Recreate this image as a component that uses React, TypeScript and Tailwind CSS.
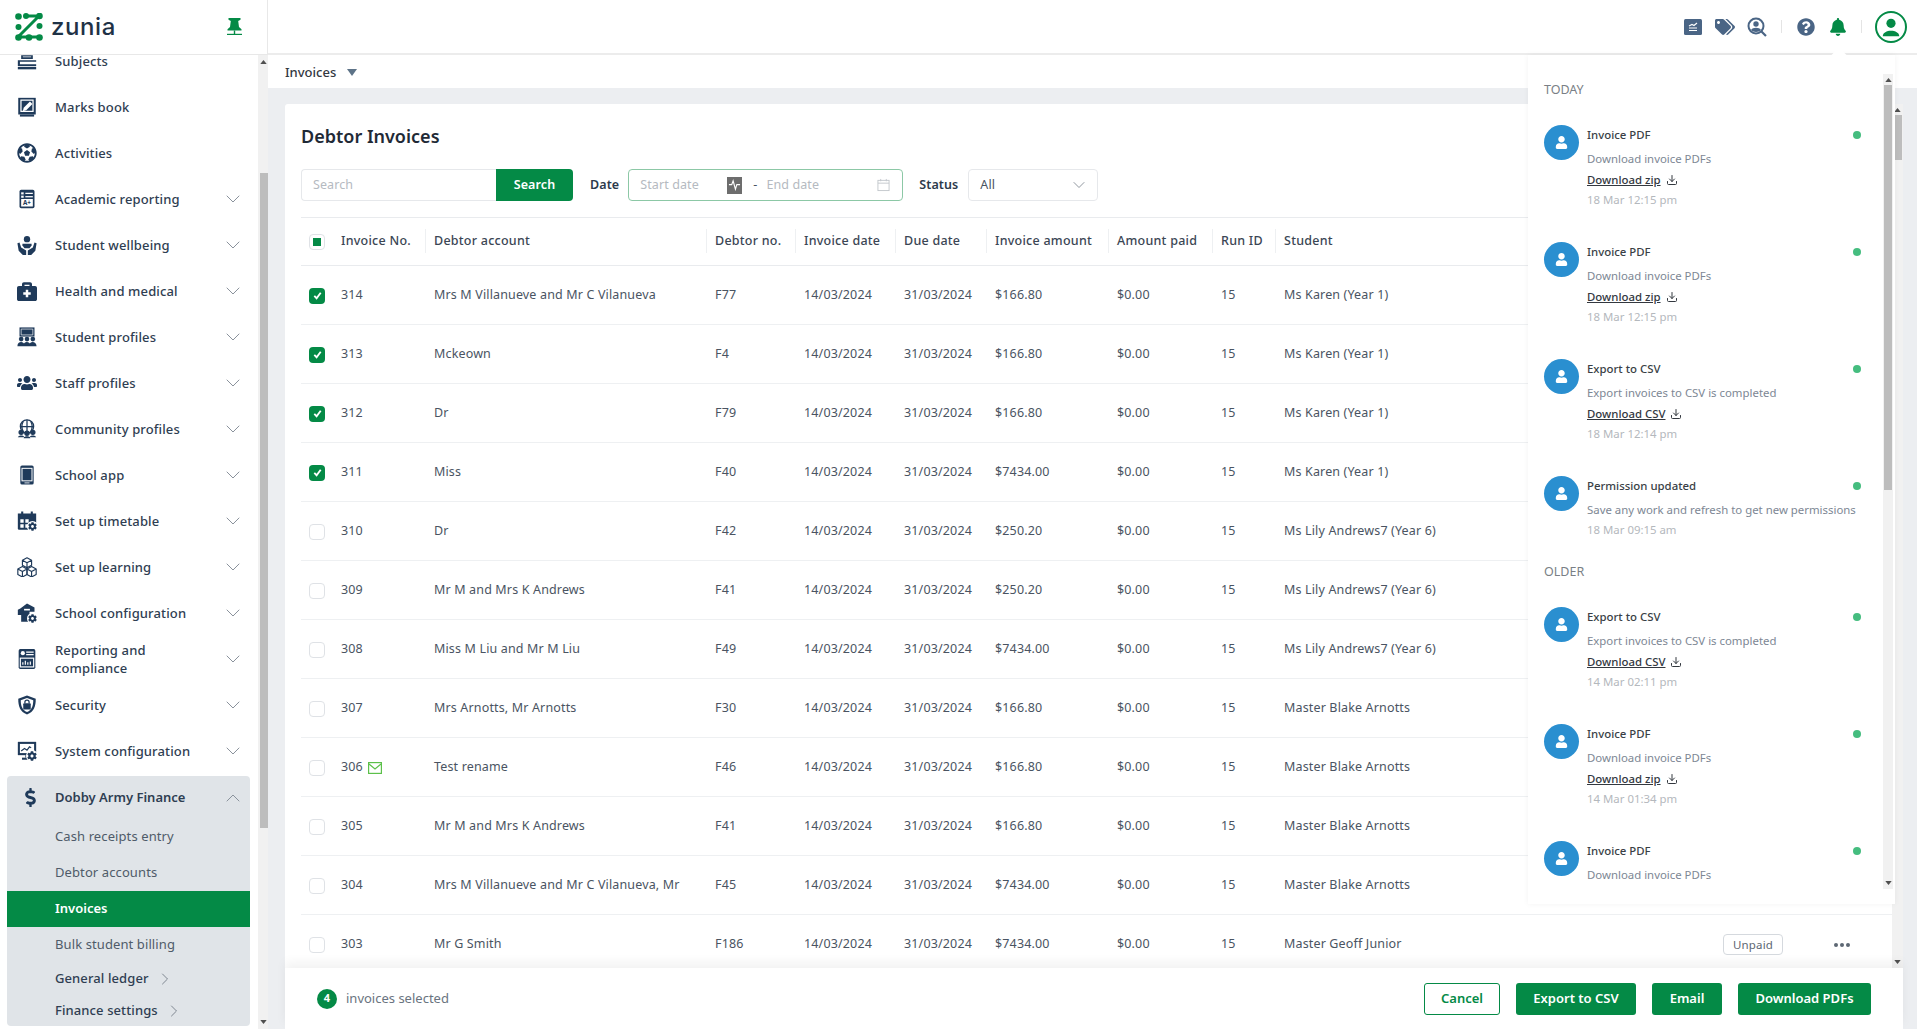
/**
 * Debtor invoices screen with the notifications panel open.
 */
import { ChevronDown, ChevronRight, ChevronUp, Download } from "lucide-react";
import {
  FaBell,
  FaBriefcaseMedical,
  FaCog,
  FaDollarSign,
  FaFutbol,
  FaQuestionCircle,
  FaTags,
  FaUser,
  FaUsers,
} from "react-icons/fa";
import type { ReactNode } from "react";

const NAVY = "#1f3a5a";

function BooksIcon() {
  return (
    <svg viewBox="0 0 24 24" className="w-5 h-5" fill={NAVY}>
      <path d="M7 2h10v2H7zM5 5h14v4.500H5zM7 7.500h10V6.500H7z" fill={NAVY} />
      <path d="M1 11h22v2H3.500v3H23v2H1z" />
      <path d="M1 19h22v3H1z" />
    </svg>
  );
}

function MarksIcon() {
  return (
    <svg viewBox="0 0 24 24" className="w-5 h-5" fill={NAVY}>
      <path d="M1.500 1h21v20h-21z" />
      <path d="M3.500 21h17v2.500h-17z" />
      <path d="M4 3h16v15H4z" fill="#fff" />
      <path d="M5.500 4.500h13v12h-13z" />
      <path d="M15.500 5.500l3 3-7.500 7.500-4 1 1-4z" fill="#fff" />
    </svg>
  );
}

function ReportIcon() {
  return (
    <svg viewBox="0 0 24 24" className="w-5 h-5">
      <rect x="3" y="1" width="18" height="22" rx="2" fill={NAVY} />
      <rect x="5" y="12" width="14" height="9" fill="#fff" />
      <rect x="5" y="4" width="3" height="2.500" fill="#fff" />
      <rect x="10" y="4.500" width="9" height="1.500" fill="#fff" />
      <rect x="5" y="8" width="3" height="2.500" fill="#fff" />
      <rect x="10" y="8.500" width="9" height="1.500" fill="#fff" />
      <text x="12" y="19.500" textAnchor="middle" fontSize="7.500" fontWeight="700" fill={NAVY} fontFamily="Noto Sans">A+</text>
    </svg>
  );
}

function WellbeingIcon() {
  return (
    <svg viewBox="0 0 24 24" className="w-5 h-5" fill={NAVY}>
      <circle cx="12" cy="5" r="3.800" />
      <path d="M6.500 10.500h11v2l-2.500 3.500H9l-2.500-3.500z" />
      <path d="M0.500 10l2.500-1 2 6 6 3.500V24H7l-5-5zM23.500 10L21 9l-2 6-6 3.500V24h4l5-5z" />
    </svg>
  );
}

function StudentProfilesIcon() {
  return (
    <svg viewBox="0 0 24 24" className="w-5 h-5" fill={NAVY}>
      <path d="M3 0.500h18v11H3z" />
      <path d="M5 2.500h14v7H5z" fill={NAVY} stroke="#fff" strokeWidth="0.800" />
      <circle cx="5" cy="14.500" r="2.800" />
      <circle cx="12" cy="14.500" r="2.800" />
      <circle cx="19" cy="14.500" r="2.800" />
      <path d="M0.500 23c0-6.500 8.500-6.500 9 0zM7.500 23c0-6.500 8.500-6.500 9 0zM14.500 23c0-6.500 8.500-6.500 9 0z" />
    </svg>
  );
}

function GlobeGroupIcon() {
  return (
    <svg viewBox="0 0 24 24" className="w-5 h-5" fill="none" stroke={NAVY} strokeWidth="1.500">
      <circle cx="12" cy="9" r="8" />
      <path d="M4 9h16M12 1v16M7.500 3c-2 3.500-2 8.500 0 12M16.500 3c2 3.500 2 8.500 0 12" />
      <circle cx="5" cy="16" r="2.500" fill={NAVY} />
      <circle cx="19" cy="16" r="2.500" fill={NAVY} />
      <circle cx="12" cy="17" r="2.500" fill={NAVY} />
      <path d="M1 22c1-3 7-3 8 0zM8 23c1-3 7-3 8 0zM15 22c1-3 7-3 8 0z" fill={NAVY} stroke="none" />
    </svg>
  );
}

function PhoneIcon() {
  return (
    <svg viewBox="0 0 24 24" className="w-5 h-5">
      <rect x="4" y="0.500" width="16" height="23" rx="2" fill={NAVY} />
      <rect x="6" y="4" width="12" height="15" fill={NAVY} stroke="#fff" strokeWidth="1.200" />
      <rect x="9" y="21" width="6" height="1" fill="#fff" />
    </svg>
  );
}

function TimetableIcon() {
  return (
    <div className="relative w-5 h-5">
      <svg viewBox="0 0 24 24" className="w-5 h-5" fill={NAVY}>
        <path d="M5 0.500h2.500v3H5zM16.500 0.500H19v3h-2.500z" />
        <path d="M1 3h22v18a1.500 1.500 0 0 1-1.500 1.500h-19A1.500 1.500 0 0 1 1 21z" />
        <path d="M4 10h4v4H4zM10 10h4v4h-4zM4 16h4v4H4zM10 16h4v4h-4z" fill="#fff" />
      </svg>
      <span className="absolute -right-[1px] -bottom-[1px] bg-white rounded-full p-[1px]">
        <FaCog size={9} color={NAVY} />
      </span>
    </div>
  );
}

function CubesIcon() {
  return (
    <svg viewBox="0 0 24 24" className="w-5 h-5" fill="none" stroke={NAVY} strokeWidth="1.400" strokeLinejoin="round">
      <path d="M12 1l5.500 3v6L12 13l-5.500-3V4zM6.500 4L12 7l5.500-3M12 7v6" />
      <path d="M6.500 11.500L12 14.500v6.500L6.500 24 1 21v-6.500zM1 14.500l5.500 3 5.500-3M6.500 17.500V24" />
      <path d="M17.500 11.500l5.500 3V21l-5.500 3L12 21v-6.500zM12 14.500l5.500 3 5.500-3M17.500 17.500V24" />
    </svg>
  );
}

function SchoolConfigIcon() {
  return (
    <div className="relative w-5 h-5">
      <svg viewBox="0 0 24 24" className="w-5 h-5" fill={NAVY}>
        <path d="M12 0.500l9 5v5h-6v12H5v-8H1V8l3-1.500z" />
        <path d="M8.500 7h7v2h-7z" fill="#fff" />
      </svg>
      <span className="absolute -right-[1px] -bottom-[1px] bg-white rounded-full p-[1px]">
        <FaCog size={9} color={NAVY} />
      </span>
    </div>
  );
}

function ComplianceIcon() {
  return (
    <svg viewBox="0 0 24 24" className="w-5 h-5">
      <rect x="2" y="0" width="20" height="24" rx="2" fill={NAVY} />
      <circle cx="7" cy="5" r="2.500" fill="#fff" />
      <path d="M11 3h9v1.500h-9zM11 6h9v1.500h-9z" fill="#fff" />
      <rect x="4" y="11" width="16" height="10.500" fill="none" stroke="#fff" strokeWidth="1.400" />
      <path d="M7 19v-3M10 19v-5M13 19v-3M16 19v-4" stroke="#fff" strokeWidth="1.400" />
    </svg>
  );
}

function ShieldIcon() {
  return (
    <svg viewBox="0 0 24 24" className="w-5 h-5">
      <path d="M12 0.500l10.500 4c0 9-2 15.500-10.500 19C3.500 20 1.500 13.500 1.500 4.500z" fill={NAVY} />
      <path d="M12 3.500l7.500 2.800c0 6.500-1.500 11.500-7.500 14.200C6 17.800 4.500 12.800 4.500 6.300z" fill="#fff" />
      <rect x="7.500" y="10" width="9" height="7.500" rx="1" fill={NAVY} />
      <path d="M9.500 10V8.500a2.500 2.500 0 0 1 5 0V10" fill="none" stroke={NAVY} strokeWidth="1.500" />
    </svg>
  );
}

function SystemIcon() {
  return (
    <div className="relative w-5 h-5">
      <svg viewBox="0 0 24 24" className="w-5 h-5" fill={NAVY}>
        <path d="M1 1h22v16H1z" />
        <path d="M3.500 3.500h17v11h-17z" fill="#fff" />
        <path d="M5 12l4-3 3 2 3-4 2 1" fill="none" stroke={NAVY} strokeWidth="1.400" />
        <path d="M6 20h10v2.500H6z" />
        <path d="M10 17h3v3h-3z" />
      </svg>
      <span className="absolute -right-[1px] -bottom-[1px] bg-white rounded-full p-[1px]">
        <FaCog size={10} color={NAVY} />
      </span>
    </div>
  );
}

function PinIcon() {
  return (
    <svg viewBox="0 0 15 18" className="w-[15px] h-[18px]" fill="#048a46">
      <path d="M1.500 0h12v1.800l-2.300 1.200.8 6 2.500 2.200v1.300H.5v-1.300L3 9l.8-6-2.300-1.200z" />
      <path d="M6.800 12.500h1.400v3.500H6.800z" />
      <path d="M0 15.800h15V17H0z" />
    </svg>
  );
}

function ScrollArrow({ up }: { up?: boolean }) {
  return (
    <svg viewBox="0 0 8 5" className="w-[7px] h-[4px]" fill="#505050">
      <path d={up ? "M4 0l4 5H0z" : "M0 0h8L4 5z"} />
    </svg>
  );
}

function Logo() {
  return (
    <div className="flex items-center gap-[8px]">
      <svg viewBox="0 0 28 28" className="w-[28px] h-[28px]" fill="#048a46">
        <path d="M10 3h14L13 14 3 24h21" fill="none" stroke="#048a46" strokeWidth="3" strokeLinejoin="round" />
        <circle cx="3.500" cy="3.500" r="3.300" />
        <circle cx="11" cy="3" r="3" />
        <circle cx="24.500" cy="3" r="3.300" />
        <circle cx="3.500" cy="14" r="3" />
        <circle cx="24.500" cy="13" r="3" />
        <circle cx="3.500" cy="24.500" r="3.300" />
        <circle cx="14" cy="24.500" r="3.300" />
        <circle cx="24.500" cy="24.500" r="3.300" />
      </svg>
      <span className="text-[24px] leading-none font-medium tracking-[0.6px] text-[#1f3246] font-['Inter',sans-serif]">zunia</span>
    </div>
  );
}

interface NavEntry {
  label: string;
  icon: ReactNode;
  chevron?: boolean;
}

const NAV: NavEntry[] = [
  { label: "Subjects", icon: <BooksIcon /> },
  { label: "Marks book", icon: <MarksIcon /> },
  { label: "Activities", icon: <FaFutbol size={20} color={NAVY} /> },
  { label: "Academic reporting", icon: <ReportIcon />, chevron: true },
  { label: "Student wellbeing", icon: <WellbeingIcon />, chevron: true },
  { label: "Health and medical", icon: <FaBriefcaseMedical size={20} color={NAVY} />, chevron: true },
  { label: "Student profiles", icon: <StudentProfilesIcon />, chevron: true },
  { label: "Staff profiles", icon: <FaUsers size={20} color={NAVY} />, chevron: true },
  { label: "Community profiles", icon: <GlobeGroupIcon />, chevron: true },
  { label: "School app", icon: <PhoneIcon />, chevron: true },
  { label: "Set up timetable", icon: <TimetableIcon />, chevron: true },
  { label: "Set up learning", icon: <CubesIcon />, chevron: true },
  { label: "School configuration", icon: <SchoolConfigIcon />, chevron: true },
  { label: "Reporting and compliance", icon: <ComplianceIcon />, chevron: true },
  { label: "Security", icon: <ShieldIcon />, chevron: true },
  { label: "System configuration", icon: <SystemIcon />, chevron: true },
];

function Sidebar() {
  return (
    <aside className="w-[268px] shrink-0 flex flex-col bg-white">
      <div className="h-[55px] shrink-0 flex items-center justify-between pl-[15px] pr-[25px] border-b border-r border-[#e8e8e8] z-10 bg-white">
        <Logo />
        <PinIcon />
      </div>
      <div className="flex-1 min-h-0 flex">
        <nav className="w-[258px] overflow-hidden">
          <div className="-mt-[17px]">
            {NAV.map((item) => (
              <div key={item.label} className="h-[46px] flex items-center pl-[17px] pr-[13px]">
                <span className="w-[38px] shrink-0 flex">{item.icon}</span>
                <span className={`w-[136px] shrink-0 text-[13px] font-medium tracking-[0.13px] text-[#2f3e52] ${item.label.length > 22 ? "leading-[18px]" : "leading-[12px] whitespace-nowrap"}`}>
                  {item.label}
                </span>
                {item.chevron && <ChevronDown className="ml-auto w-[24px] h-[24px] text-[#8a929c]" strokeWidth={1} />}
              </div>
            ))}
            <div className="mt-[2px] mx-[7px] w-[243px] h-[250px] rounded-[4px] bg-[#e0e4e8] overflow-hidden">
              <div className="h-[43px] flex items-center pl-[10px] pr-[5px]">
                <span className="w-[38px] shrink-0 flex pl-[4px]"><FaDollarSign size={19} color={NAVY} /></span>
                <span className="text-[13px] font-semibold text-[#2f3e52]">Dobby Army Finance</span>
                <ChevronUp className="ml-auto w-[24px] h-[24px] text-[#8a929c]" strokeWidth={1} />
              </div>
              <div className="h-[36px] flex items-center pl-[48px] text-[13px] tracking-[0.1px] text-[#4f5b69]">Cash receipts entry</div>
              <div className="h-[36px] flex items-center pl-[48px] text-[13px] tracking-[0.1px] text-[#4f5b69]">Debtor accounts</div>
              <div className="h-[36px] flex items-center pl-[48px] text-[13px] font-semibold text-white bg-[#048a46]">Invoices</div>
              <div className="h-[36px] flex items-center pl-[48px] text-[13px] tracking-[0.1px] text-[#4f5b69]">Bulk student billing</div>
              <div className="h-[32px] flex items-center pl-[48px] text-[13px] font-medium tracking-[0.1px] text-[#2f3e52]">
                General ledger
                <ChevronRight className="ml-[6px] w-[20px] h-[20px] text-[#6b7480]" strokeWidth={1} />
              </div>
              <div className="h-[31px] flex items-center pl-[48px] text-[13px] font-medium tracking-[0.1px] text-[#2f3e52]">
                Finance settings
                <ChevronRight className="ml-[6px] w-[20px] h-[20px] text-[#6b7480]" strokeWidth={1} />
              </div>
            </div>
          </div>
        </nav>
        <div className="w-[10px] bg-[#f1f1f1] flex flex-col items-center justify-between py-[5px] relative">
          <ScrollArrow up />
          <div className="absolute left-[2px] right-0 top-[118px] h-[655px] bg-[#bdbdbd]" />
          <ScrollArrow />
        </div>
      </div>
    </aside>
  );
}

function TopBar() {
  return (
    <header className="h-[55px] shrink-0 bg-white border-b-2 border-[#ececec] flex items-center justify-end pr-[10px] relative">
      <svg viewBox="0 0 18 16" className="w-[18px] h-[16px] mr-[13px]">
        <rect width="18" height="16" rx="1.500" fill="#4a6585" />
        <path d="M5 7l3-1.500 2 1L13 4M5 9h8M5 11.500h8" fill="none" stroke="#fff" strokeWidth="1.200" />
      </svg>
      <FaTags size={20} color="#4a6585" className="mr-[12px]" />
      <svg viewBox="0 0 20 20" className="w-[20px] h-[20px] mr-[14px]">
        <circle cx="9" cy="9" r="7.500" fill="none" stroke="#4a6585" strokeWidth="2" />
        <circle cx="9" cy="7" r="2.700" fill="#4a6585" />
        <path d="M4 13c1.500-3 8.500-3 10 0-2 2.500-8 2.500-10 0z" fill="#4a6585" />
        <path d="M14.500 14.500l4.500 4.500" stroke="#4a6585" strokeWidth="2.200" />
      </svg>
      <span className="w-px h-[13px] bg-[#e4e4e4] mr-[15px]" />
      <FaQuestionCircle size={18} color="#4a6585" className="mr-[14px]" />
      <FaBell size={18} color="#048a46" className="mr-[14px]" />
      <span className="w-px h-[13px] bg-[#e4e4e4] mr-[13px]" />
      <span className="w-[32px] h-[32px] rounded-full border-2 border-[#048a46] flex items-center justify-center overflow-hidden">
        <svg viewBox="0 0 24 24" className="w-[22px] h-[22px]" fill="#048a46">
          <circle cx="12" cy="8" r="5" />
          <path d="M3 22c0-8 18-8 18 0z" />
        </svg>
      </span>
    </header>
  );
}

interface Invoice {
  no: number;
  account: string;
  debtorNo: string;
  amount: string;
  student: string;
  checked?: boolean;
  mailed?: boolean;
}

const INVOICES: Invoice[] = [
  { no: 314, account: "Mrs M Villanueve and Mr C Vilanueva", debtorNo: "F77", amount: "$166.80", student: "Ms Karen (Year 1)", checked: true },
  { no: 313, account: "Mckeown", debtorNo: "F4", amount: "$166.80", student: "Ms Karen (Year 1)", checked: true },
  { no: 312, account: "Dr", debtorNo: "F79", amount: "$166.80", student: "Ms Karen (Year 1)", checked: true },
  { no: 311, account: "Miss", debtorNo: "F40", amount: "$7434.00", student: "Ms Karen (Year 1)", checked: true },
  { no: 310, account: "Dr", debtorNo: "F42", amount: "$250.20", student: "Ms Lily Andrews7 (Year 6)" },
  { no: 309, account: "Mr M and Mrs K Andrews", debtorNo: "F41", amount: "$250.20", student: "Ms Lily Andrews7 (Year 6)" },
  { no: 308, account: "Miss M Liu and Mr M Liu", debtorNo: "F49", amount: "$7434.00", student: "Ms Lily Andrews7 (Year 6)" },
  { no: 307, account: "Mrs Arnotts, Mr Arnotts", debtorNo: "F30", amount: "$166.80", student: "Master Blake Arnotts" },
  { no: 306, account: "Test rename", debtorNo: "F46", amount: "$166.80", student: "Master Blake Arnotts", mailed: true },
  { no: 305, account: "Mr M and Mrs K Andrews", debtorNo: "F41", amount: "$166.80", student: "Master Blake Arnotts" },
  { no: 304, account: "Mrs M Villanueve and Mr C Vilanueva, Mr", debtorNo: "F45", amount: "$7434.00", student: "Master Blake Arnotts" },
  { no: 303, account: "Mr G Smith", debtorNo: "F186", amount: "$7434.00", student: "Master Geoff Junior" },
];

const GRID = "grid grid-cols-[40px_93px_281px_89px_100px_91px_122px_104px_63px_439px_107px_auto] items-center";

const HEADERS = ["Invoice No.", "Debtor account", "Debtor no.", "Invoice date", "Due date", "Invoice amount", "Amount paid", "Run ID", "Student"];

function Check({ checked }: { checked?: boolean }) {
  if (checked) {
    return (
      <span className="w-[16px] h-[16px] ml-[8px] rounded-[4px] bg-[#048a46] flex items-center justify-center">
        <svg viewBox="0 0 12 12" className="w-[11px] h-[11px]" fill="none" stroke="#fff" strokeWidth="2">
          <path d="M2.500 6.500l2.500 2.500 4.500-6" />
        </svg>
      </span>
    );
  }
  return <span className="block w-[16px] h-[16px] ml-[8px] rounded-[4px] border border-[#dfe2e6] bg-white" />;
}

function InvoiceTable() {
  return (
    <div>
      <div className={`${GRID} h-[49px] border-y border-[#e9ebee] text-[12.5px] font-medium tracking-[0.25px] text-[#3b4654]`}>
        <span className="w-[16px] h-[16px] ml-[8px] rounded-[4px] border border-[#dfe2e6] flex items-center justify-center">
          <span className="w-[8px] h-[8px] bg-[#048a46]" />
        </span>
        {HEADERS.map((h, i) => (
          <span key={h} className="relative">
            {i > 0 && <span className="absolute -left-[9px] -top-[3px] h-[24px] w-px bg-[#eef0f2]" />}
            {h}
          </span>
        ))}
      </div>
      {INVOICES.map((row) => (
        <div key={row.no} className={`${GRID} h-[59px] pt-[1px] border-b border-[#eef0f2] text-[12.5px] tracking-[0.15px] text-[#4a5462]`}>
          <Check checked={row.checked} />
          <span className="flex items-center gap-[5px]">
            {row.no}
            {row.mailed && (
              <svg viewBox="0 0 14 12" className="w-[14px] h-[12px]" fill="none" stroke="#5cc04a" strokeWidth="1.200">
                <rect x="0.600" y="0.600" width="12.800" height="10.800" />
                <path d="M1 2l6 5 6-5" />
              </svg>
            )}
          </span>
          <span className="whitespace-nowrap">{row.account}</span>
          <span>{row.debtorNo}</span>
          <span>14/03/2024</span>
          <span>31/03/2024</span>
          <span>{row.amount}</span>
          <span>$0.00</span>
          <span>15</span>
          <span>{row.student}</span>
          <span>
            <span className="inline-flex h-[21px] items-center px-[9px] rounded-[4px] border border-[#d5d9de] text-[11.5px] text-[#5d6773] bg-white">Unpaid</span>
          </span>
          <span className="flex gap-[2px] pl-[4px]">
            <span className="w-[4px] h-[4px] rounded-full bg-[#5d6773]" />
            <span className="w-[4px] h-[4px] rounded-full bg-[#5d6773]" />
            <span className="w-[4px] h-[4px] rounded-full bg-[#5d6773]" />
          </span>
        </div>
      ))}
    </div>
  );
}

function Filters() {
  return (
    <div className="flex items-center mt-[19px] text-[12.5px] tracking-[0.1px]">
      <div className="w-[195px] h-[32px] border border-r-0 border-[#e6e8eb] rounded-l-[4px] flex items-center pl-[11px] text-[#b5bac1]">Search</div>
      <button className="w-[77px] h-[32px] bg-[#048a46] rounded-r-[4px] text-white font-semibold">Search</button>
      <span className="ml-[17px] font-semibold text-[#2c3a4b]">Date</span>
      <div className="ml-[9px] w-[275px] h-[32px] border border-[#8cc8a6] rounded-[4px] flex items-center pl-[11px] pr-[12px] text-[#b5bac1]">
        <span className="w-[87px]">Start date</span>
        <span className="w-[15px] h-[17px] bg-[#6d6d6d] flex items-center justify-center">
          <svg viewBox="0 0 14 16" className="w-[13px] h-[15px]" fill="none" stroke="#fff" strokeWidth="1.200">
            <path d="M1 7h3l1.500-4L8 12l1.500-5H13" />
          </svg>
        </span>
        <span className="ml-[11px] text-[#4a5462]">-</span>
        <span className="ml-[9px]">End date</span>
        <svg viewBox="0 0 14 14" className="ml-auto w-[13px] h-[14px]" fill="none" stroke="#c3c7cc" strokeWidth="1">
          <rect x="1" y="2" width="12" height="11" />
          <path d="M1 5h12M4 0.500v2.500M10 0.500v2.500" />
        </svg>
      </div>
      <span className="ml-[16px] font-semibold text-[#2c3a4b]">Status</span>
      <div className="ml-[10px] w-[130px] h-[32px] border border-[#e6e8eb] rounded-[4px] flex items-center pl-[11px] pr-[8px] text-[#4a5462]">
        All
        <ChevronDown className="ml-auto w-[20px] h-[20px] text-[#7a828c]" strokeWidth={1} />
      </div>
    </div>
  );
}

interface Note {
  title: string;
  body: string;
  link?: string;
  time?: string;
}

const TODAY: Note[] = [
  { title: "Invoice PDF", body: "Download invoice PDFs", link: "Download zip", time: "18 Mar 12:15 pm" },
  { title: "Invoice PDF", body: "Download invoice PDFs", link: "Download zip", time: "18 Mar 12:15 pm" },
  { title: "Export to CSV", body: "Export invoices to CSV is completed", link: "Download CSV", time: "18 Mar 12:14 pm" },
  { title: "Permission updated", body: "Save any work and refresh to get new permissions", time: "18 Mar 09:15 am" },
];

const OLDER: Note[] = [
  { title: "Export to CSV", body: "Export invoices to CSV is completed", link: "Download CSV", time: "14 Mar 02:11 pm" },
  { title: "Invoice PDF", body: "Download invoice PDFs", link: "Download zip", time: "14 Mar 01:34 pm" },
  { title: "Invoice PDF", body: "Download invoice PDFs" },
];

function NoteItem({ note }: { note: Note }) {
  return (
    <div className={`flex ${note.link ? "h-[117px]" : "h-[87px]"}`}>
      <span className="w-[35px] h-[35px] rounded-full bg-[#2a8fd0] flex items-center justify-center shrink-0">
        <FaUser size={13} color="#fff" />
      </span>
      <div className="ml-[8px] flex-1 text-[11.4px] leading-[16px]">
        <div className="flex items-center justify-between pr-[14px] h-[20px]">
          <span className="font-medium text-[#3a3f46]">{note.title}</span>
          <span className="w-[8px] h-[8px] rounded-full bg-[#45bd7f]" />
        </div>
        <div className="mt-[6px] text-[#7d8794]">{note.body}</div>
        {note.link && (
          <div className="mt-[5px] flex items-center gap-[5px] text-[#33383f] font-medium">
            <span className="underline">{note.link}</span>
            <Download className="w-[12px] h-[12px]" strokeWidth={2} />
          </div>
        )}
        {note.time && <div className="mt-[4px] text-[#b4b8bd]">{note.time}</div>}
      </div>
    </div>
  );
}

function NotificationPanel() {
  return (
    <div className="absolute left-[1260px] top-[55px] w-[367px] h-[849px] bg-white shadow-[0_0_6px_rgba(0,0,0,0.05)] flex">
      <span className="absolute left-[305px] -top-[5px] w-[12px] h-[12px] rotate-45 bg-white" />
      <div className="flex-1 min-w-0 overflow-hidden pl-[16px] pr-[8px] pt-[26px] h-[833px]">
        <div className="text-[12.5px] leading-[18px] text-[#7a7f86] mb-[26px]">TODAY</div>
        {TODAY.map((n, i) => <NoteItem key={i} note={n} />)}
        <div className="text-[12.5px] leading-[18px] text-[#7a7f86] mb-[26px]">OLDER</div>
        {OLDER.map((n, i) => <NoteItem key={i} note={n} />)}
      </div>
      <div className="w-[10px] mr-[2px] mt-[19px] h-[815px] bg-[#f1f1f1] flex flex-col items-center justify-between py-[4px] relative">
        <ScrollArrow up />
        <div className="absolute left-[1px] right-[1px] top-[11px] h-[405px] bg-[#bdbdbd]" />
        <ScrollArrow />
      </div>
    </div>
  );
}

function Footer() {
  return (
    <div className="h-[61px] shrink-0 ml-[17px] mr-[14px] bg-white shadow-[0_-6px_10px_rgba(0,0,0,0.05)] flex items-center pl-[32px] pr-[32px] relative text-[13px]">
      <span className="w-[20px] h-[20px] rounded-full bg-[#048a46] text-white text-[11px] font-bold flex items-center justify-center">4</span>
      <span className="ml-[9px] text-[#6a7480]">invoices selected</span>
      <button className="ml-auto w-[76px] h-[32px] rounded-[3px] border border-[#048a46] text-[#048a46] font-semibold">Cancel</button>
      <button className="ml-[16px] w-[120px] h-[32px] rounded-[3px] bg-[#048a46] text-white font-semibold">Export to CSV</button>
      <button className="ml-[16px] w-[70px] h-[32px] rounded-[3px] bg-[#048a46] text-white font-semibold">Email</button>
      <button className="ml-[16px] w-[133px] h-[32px] rounded-[3px] bg-[#048a46] text-white font-semibold">Download PDFs</button>
    </div>
  );
}

export default function App() {
  return (
    <div className="w-[1917px] h-[1029px] flex overflow-hidden bg-white font-['Noto_Sans',sans-serif]">
      <Sidebar />
      <main className="flex-1 min-w-0 flex flex-col bg-[#eceef1] relative">
        <TopBar />
        <div className="h-[33px] shrink-0 bg-white flex items-center pl-[17px] pt-[2px] gap-[11px] text-[13px] font-medium text-[#33383f]">
          Invoices
          <svg viewBox="0 0 10 7" className="w-[10px] h-[7px]" fill="#5d7388">
            <path d="M0 0h10L5 7z" />
          </svg>
        </div>
        <div className="flex-1 min-h-0 flex pl-[17px] pr-[14px] pt-[16px]">
          <section className="flex-1 min-w-0 bg-white rounded-t-[3px] pl-[16px] pt-[18px] overflow-hidden">
            <h1 className="text-[18px] leading-[28px] font-semibold text-[#1f2a36]">Debtor Invoices</h1>
            <Filters />
            <div className="mt-[16px]">
              <InvoiceTable />
            </div>
          </section>
          <div className="w-[11px] shrink-0 bg-[#f1f1f1] flex flex-col items-center justify-between py-[4px] relative">
            <ScrollArrow up />
            <div className="absolute left-[2px] right-[1px] top-[11px] h-[45px] bg-[#bdbdbd]" />
            <ScrollArrow />
          </div>
        </div>
        <Footer />
        <NotificationPanel />
      </main>
    </div>
  );
}
